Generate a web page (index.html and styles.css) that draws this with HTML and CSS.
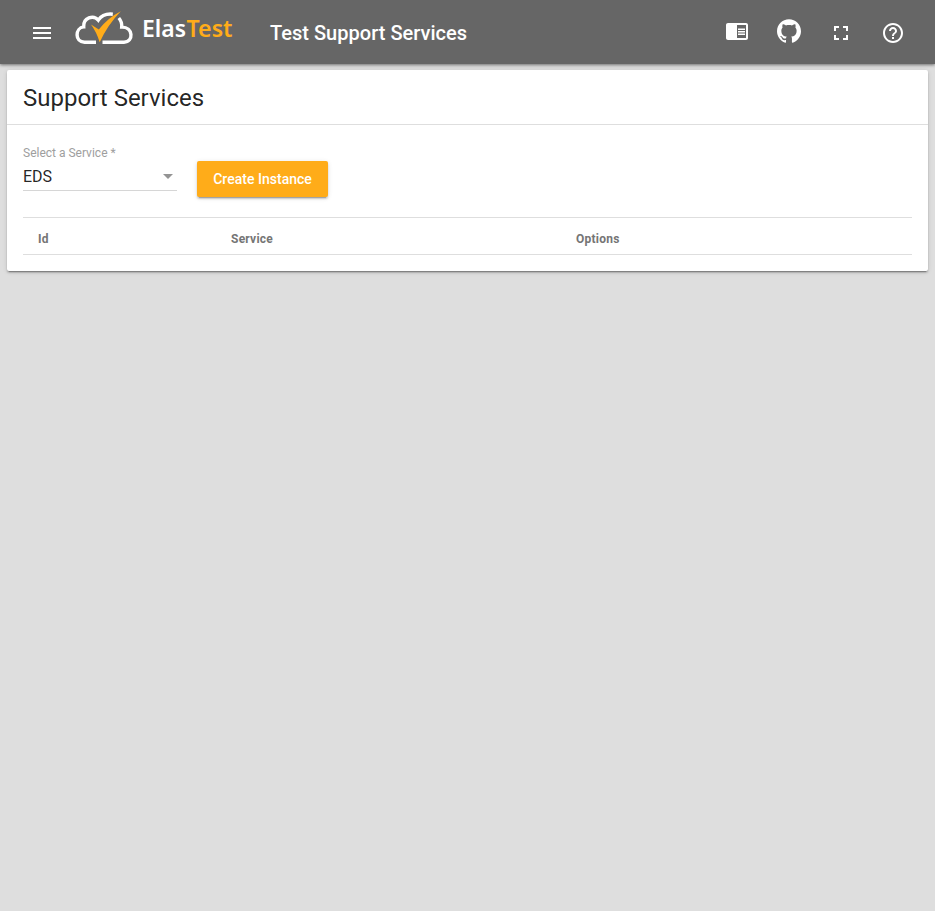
FILE: index.html
```html
<!DOCTYPE html>
<html lang="en">
<head>
<meta charset="utf-8">
<title>ElasTest</title>
<link rel="stylesheet" href="styles.css">
</head>
<body>
<header class="toolbar">
  <button class="icon-button menu" aria-label="Menu"><svg width="24" height="24" viewBox="0 0 24 24"><path d="M3 18h18v-2H3v2zm0-5h18v-2H3v2zm0-7v2h18V6H3z"/></svg></button>
  <svg class="logo" width="160" height="40" viewBox="74 8 160 40">
    <g class="cloud">
      <path d="M96 42.200H84.500C74.500 42.200 75 27.800 83.700 26.900C83 17.500 93.500 14.500 98.300 20.100C101.500 15.400 107 13.600 112.800 14.200"/>
      <path d="M118.800 18C121 20.500 122 23.500 121.700 27.100C133.300 26.800 134 42.200 124 42.200H102.500"/>
    </g>
    <path class="check" d="M91 24.500L98.800 29.600Q107.500 18 120.800 11.200Q107.500 25 99.700 42.200Q96.500 32 91 24.500Z"/>
    <text class="brand" x="142" y="36.800" textLength="44" lengthAdjust="spacingAndGlyphs">Elas</text>
    <text class="brand accent" x="186.500" y="36.800" textLength="46" lengthAdjust="spacingAndGlyphs">Test</text>
  </svg>
  <h1 class="page-title">Test Support Services</h1>
  <nav class="actions">
    <button class="icon-button raised" aria-label="Documentation"><svg width="24" height="24" viewBox="0 0 24 24"><path d="M13 12h7v1.500h-7zm0-2.500h7V11h-7zm0 5h7V16h-7zM21 4H3c-1.100 0-2 .9-2 2v13c0 1.100.9 2 2 2h18c1.100 0 2-.9 2-2V6c0-1.100-.9-2-2-2zm0 15h-9V6h9v13z"/></svg></button>
    <button class="icon-button raised" aria-label="GitHub"><svg width="24" height="24" viewBox="0 0 24 24"><path d="M12 .297c-6.630 0-12 5.373-12 12 0 5.303 3.438 9.800 8.205 11.385.6.113.82-.258.82-.577 0-.285-.01-1.040-.015-2.040-3.338.724-4.042-1.610-4.042-1.610C4.422 18.070 3.633 17.700 3.633 17.700c-1.087-.744.084-.729.084-.729 1.205.084 1.838 1.236 1.838 1.236 1.070 1.835 2.809 1.305 3.495.998.108-.776.417-1.305.76-1.605-2.665-.3-5.466-1.332-5.466-5.930 0-1.310.465-2.380 1.235-3.220-.135-.303-.54-1.523.105-3.176 0 0 1.005-.322 3.300 1.230.96-.267 1.980-.399 3-.405 1.020.006 2.040.138 3 .405 2.280-1.552 3.285-1.230 3.285-1.230.645 1.653.24 2.873.12 3.176.765.840 1.230 1.910 1.230 3.220 0 4.610-2.805 5.625-5.475 5.920.42.360.81 1.096.81 2.220 0 1.606-.015 2.896-.015 3.286 0 .315.21.690.825.570C20.565 22.092 24 17.592 24 12.297c0-6.627-5.373-12-12-12"/></svg></button>
    <button class="icon-button" aria-label="Fullscreen"><svg width="24" height="24" viewBox="0 0 24 24"><path d="M7 14H5v5h5v-2H7v-3zm-2-4h2V7h3V5H5v5zm12 7h-3v2h5v-5h-2v3zM14 5v2h3v3h2V5h-5z"/></svg></button>
    <button class="icon-button" aria-label="Help"><svg width="24" height="24" viewBox="0 0 24 24"><path d="M11 18h2v-2h-2v2zm1-16C6.480 2 2 6.480 2 12s4.480 10 10 10 10-4.480 10-10S17.520 2 12 2zm0 18c-4.410 0-8-3.590-8-8s3.590-8 8-8 8 3.590 8 8-3.590 8-8 8zm0-14c-2.210 0-4 1.790-4 4h2c0-1.100.9-2 2-2s2 .9 2 2c0 2-3 1.750-3 5h2c0-2.250 3-2.500 3-5 0-2.210-1.790-4-4-4z"/></svg></button>
  </nav>
</header>
<main class="card">
  <h2 class="card-title">Support Services</h2>
  <div class="card-content">
    <div class="form-row">
      <div class="select">
        <div class="select-label">Select a Service *</div>
        <div class="select-value">EDS<span class="arrow"></span></div>
      </div>
      <button class="create">Create Instance</button>
    </div>
    <table class="services">
      <thead><tr><th class="col-id">Id</th><th class="col-service">Service</th><th>Options</th></tr></thead>
    </table>
  </div>
</main>
</body>
</html>
```
FILE: styles.css
```css
* { box-sizing: border-box; }
body {
  margin: 0;
  min-height: 100vh;
  background: #dedede;
  color: rgba(0, 0, 0, .87);
  font-family: Roboto, sans-serif;
}
button { border: 0; padding: 0; font: inherit; }
.toolbar {
  display: flex;
  align-items: center;
  height: 64px;
  padding: 2px 30px 0;
  background: #666;
  color: #fff;
  box-shadow: 0 1px 3px rgba(0, 0, 0, .5);
}
.icon-button { display: block; width: 24px; height: 24px; background: none; }
.icon-button svg { display: block; fill: #fff; }
.raised { margin-top: -2px; }
.logo { margin: -10px 0 0 20px; }
.cloud { fill: none; stroke: #fff; stroke-width: 3.400; }
.check { fill: #ffac19; }
.brand { font: 600 24px "Noto Sans", sans-serif; fill: #fff; }
.brand.accent { fill: #ffac19; }
.page-title {
  margin: 0 0 0 36px;
  font-size: 20px;
  font-weight: 500;
  line-height: 24px;
  letter-spacing: .02px;
}
.actions { display: flex; gap: 28px; margin-left: auto; }
.card {
  margin: 6px 7px 0;
  height: 201px;
  background: #fff;
  border-radius: 2px;
  box-shadow: 0 3px 1px -2px rgba(0, 0, 0, .2), 0 2px 2px 0 rgba(0, 0, 0, .14), 0 1px 5px 0 rgba(0, 0, 0, .12), 0 1px 1px rgba(0, 0, 0, .1);
}
.card-title {
  height: 55px;
  margin: 0;
  padding: 0 16px;
  border-bottom: 1px solid #dedede;
  font-size: 24px;
  font-weight: 400;
  line-height: 56px;
}
.card-content { padding: 0 16px; }
.form-row { display: flex; align-items: flex-start; height: 92px; padding-top: 21px; }
.select { width: 154px; height: 45px; border-bottom: 1px solid #d6d6d6; }
.select-label { font-size: 12px; line-height: 14px; color: #9e9e9e; }
.select-value {
  display: flex;
  align-items: center;
  justify-content: space-between;
  margin-top: 7px;
  padding-right: 4px;
  font-size: 16px;
  line-height: 20px;
}
.arrow { margin-bottom: 2px; border: 5px solid transparent; border-top-color: #949494; border-bottom: 0; }
.create {
  width: 131px;
  height: 36px;
  margin: 15px 0 0 20px;
  border-radius: 2px;
  background: #ffac19;
  color: #fff;
  font-size: 14px;
  font-weight: 500;
  letter-spacing: .02px;
  box-shadow: 0 3px 1px -2px rgba(0, 0, 0, .2), 0 2px 2px 0 rgba(0, 0, 0, .14), 0 1px 5px 0 rgba(0, 0, 0, .12);
}
.services {
  width: 100%;
  height: 38px;
  border-top: 1px solid #dedede;
  border-bottom: 1px solid #dedede;
  border-collapse: separate;
  border-spacing: 0;
  table-layout: fixed;
}
.services th {
  padding: 6px 0 0 15px;
  color: #757575;
  font-size: 12px;
  font-weight: 700;
  letter-spacing: .25px;
  text-align: left;
}
.col-id { width: 193px; }
.col-service { width: 345px; }
```
